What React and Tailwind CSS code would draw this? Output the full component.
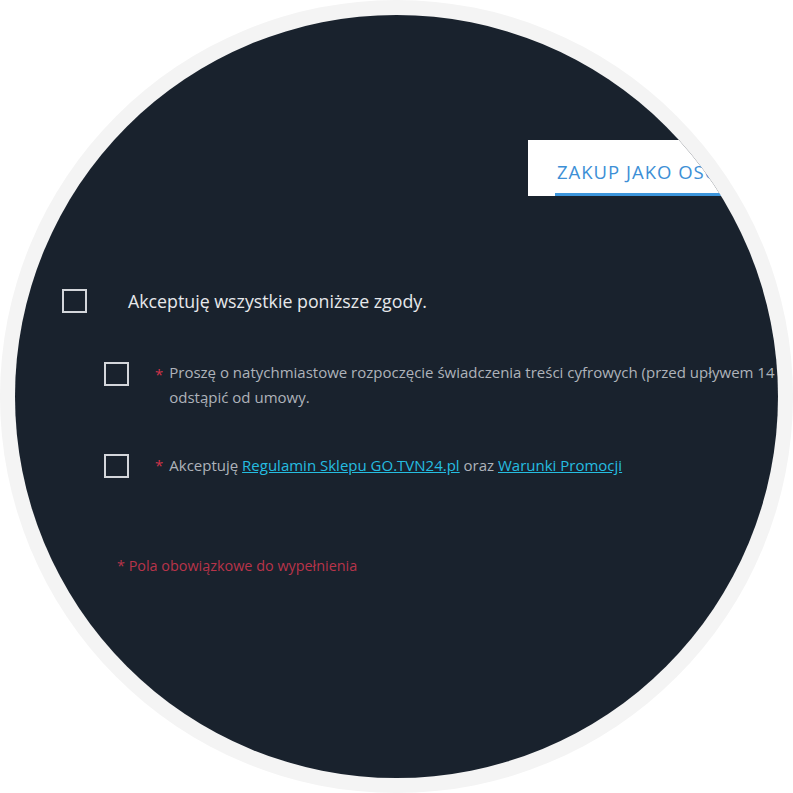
export default function App() {
  const font = { fontFamily: '"Open Sans", "Noto Sans", sans-serif' };
  return (
    <div className="w-[793px] h-[793px] bg-white" style={font}>
      <div className="w-[793px] h-[793px] rounded-full bg-[#f4f4f4] p-[15px]">
        <div className="w-full h-full rounded-full bg-[#19222d] overflow-hidden">
          <div className="pt-[125px]">
            <div className="pl-[513px]">
              <div className="w-[320px] h-[56px] bg-white pl-[27px] flex items-end">
                <span className="px-[2px] pb-[10px] border-b-[3px] border-[#3d96dc] text-[18.5px] tracking-[1px] leading-[22px] text-[#3d8fd6] whitespace-nowrap">
                  ZAKUP JAKO OSOBA PRYWATNA
                </span>
              </div>
            </div>

            <div className="mt-[92px] pl-[47px] flex items-center">
              <div className="w-[25px] h-[24px] border-2 border-[#d3d6da] shrink-0" />
              <span className="ml-[41px] text-[17.8px] text-[#e6e8eb] whitespace-nowrap">
                Akceptuję wszystkie poniższe zgody.
              </span>
            </div>

            <div className="mt-[47px] pl-[89px] flex items-start">
              <div className="w-[25px] h-[24px] border-2 border-[#d3d6da] shrink-0" />
              <span className="ml-[26px] text-[15px] text-[#d0344a] leading-[24px]">*</span>
              <div className="ml-[6px] -mt-[2px] text-[15px] leading-[25px] text-[#aeb3ba] whitespace-nowrap">
                <div>Proszę o natychmiastowe rozpoczęcie świadczenia treści cyfrowych (przed upływem 14 dni od zawarcia umowy), co oznacza utratę prawa, by</div>
                <div>odstąpić od umowy.</div>
              </div>
            </div>

            <div className="mt-[44px] pl-[89px] flex items-center">
              <div className="w-[25px] h-[24px] border-2 border-[#d3d6da] shrink-0" />
              <span className="ml-[26px] text-[15px] text-[#d0344a]">*</span>
              <span className="ml-[6px] text-[15px] text-[#aeb3ba] whitespace-nowrap">
                Akceptuję{" "}
                <a className="text-[#25bde0] underline">Regulamin Sklepu GO.TVN24.pl</a>{" "}
                oraz{" "}
                <a className="text-[#25bde0] underline">Warunki Promocji</a>
              </span>
            </div>

            <div className="mt-[77px] pl-[102px] text-[14.4px] text-[#b8344a] whitespace-nowrap">
              * Pola obowiązkowe do wypełnienia
            </div>
          </div>
        </div>
      </div>
    </div>
  );
}
